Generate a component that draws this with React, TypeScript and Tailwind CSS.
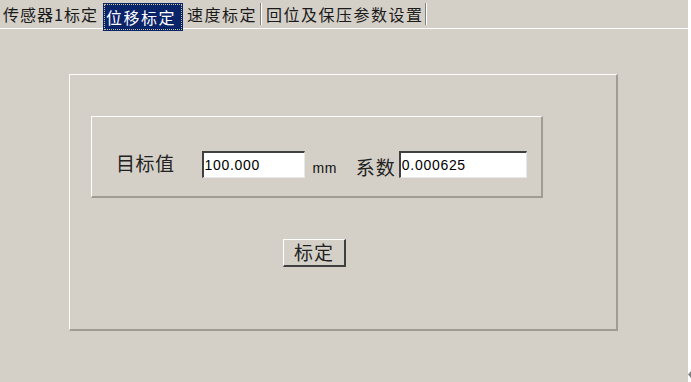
const cjk = { fontFamily: '"Noto Sans CJK SC", "Noto Sans", sans-serif' };
const latin = { fontFamily: '"Liberation Sans", Arial, sans-serif' };

// ── Tab strip ────────────────────────────────────────────────────────────────
const TabBar = () => (
  <div className="flex h-[29px] items-start whitespace-nowrap border-b border-white text-[16px] tracking-[1.5px] text-[#1a1a1a]" style={cjk}>
    <div className="flex h-[28px] w-[101px] items-center pl-[3px] tracking-[1px]">传感器1标定</div>
    {/* selected tab */}
    <div className="relative ml-[2px] mt-[3px] flex h-[28px] w-[80px] items-center bg-[#0a246a] pl-[3px] text-white">
      <div className="absolute inset-[1px] border border-dotted border-[#c8c4a0]" />
      <span className="relative">位移标定</span>
    </div>
    <div className="flex h-[28px] w-[77px] items-center pl-[4px]">速度标定</div>
    <div className="mt-[3px] h-[22px] w-[2px] border-l border-[#808080] bg-white" />
    <div className="flex h-[28px] w-[163px] items-center pl-[4px]">回位及保压参数设置</div>
    <div className="mt-[3px] h-[22px] w-[2px] border-l border-[#808080] bg-white" />
  </div>
);

// sunken text box
const Field = ({ value, w }: { value: string; w: string }) => (
  <div
    className={`flex h-[27px] ${w} items-center border-t-2 border-l-2 border-r border-b border-t-[#404040] border-l-[#404040] border-r-[#e8e8e8] border-b-[#e8e8e8] bg-white pl-[1px] text-[14px] tracking-[0.7px] text-black`}
    style={latin}
  >
    {value}
  </div>
);

export default function App() {
  return (
    <div className="flex h-[382px] w-[691px] overflow-hidden bg-[#d4d0c8]">
      <div className="flex w-[688px] flex-col">
        <TabBar />

        {/* ── Outer panel ───────────────────────────────── */}
        <div className="ml-[69px] mt-[45px] flex h-[257px] w-[549px] flex-col border-t border-l border-r-2 border-b-2 border-t-white border-l-white border-r-[#a09c94] border-b-[#a09c94]">
          {/* group box */}
          <div className="ml-[21px] mt-[41px] flex h-[82px] w-[452px] items-start border-t border-l border-r-2 border-b-2 border-t-white border-l-white border-r-[#a09c94] border-b-[#a09c94] pt-[34px]">
            <span className="ml-[24px] mt-[-1px] text-[19px] leading-[26px] tracking-[0.5px] text-[#222]" style={cjk}>
              目标值
            </span>
            <div className="ml-[27px]">
              <Field value="100.000" w="w-[103px]" />
            </div>
            <span className="ml-[8px] mt-[9px] text-[14px] leading-[16px] tracking-[0.5px] text-[#111]" style={latin}>
              mm
            </span>
            <span className="ml-[19px] mt-[4px] text-[19px] leading-[24px] tracking-[1px] text-[#222]" style={cjk}>
              系数
            </span>
            <div className="ml-[3px]">
              <Field value="0.000625" w="w-[128px]" />
            </div>
          </div>

          {/* button */}
          <button
            className="ml-[213px] mt-[41px] flex h-[28px] w-[63px] items-center justify-center border-t border-l border-r-2 border-b-2 border-t-white border-l-white border-r-[#404040] border-b-[#404040] bg-[#d4d0c8] text-[19px] tracking-[1px] text-[#222]"
            style={cjk}
          >
            标定
          </button>
        </div>
      </div>

      {/* right edge strip */}
      <div className="flex w-[3px] flex-col justify-end bg-white pb-[4px]">
        <svg width="3" height="7" viewBox="0 0 3 7">
          <polygon points="3,0 0,3.5 3,7" fill="#808080" />
        </svg>
      </div>
    </div>
  );
}
